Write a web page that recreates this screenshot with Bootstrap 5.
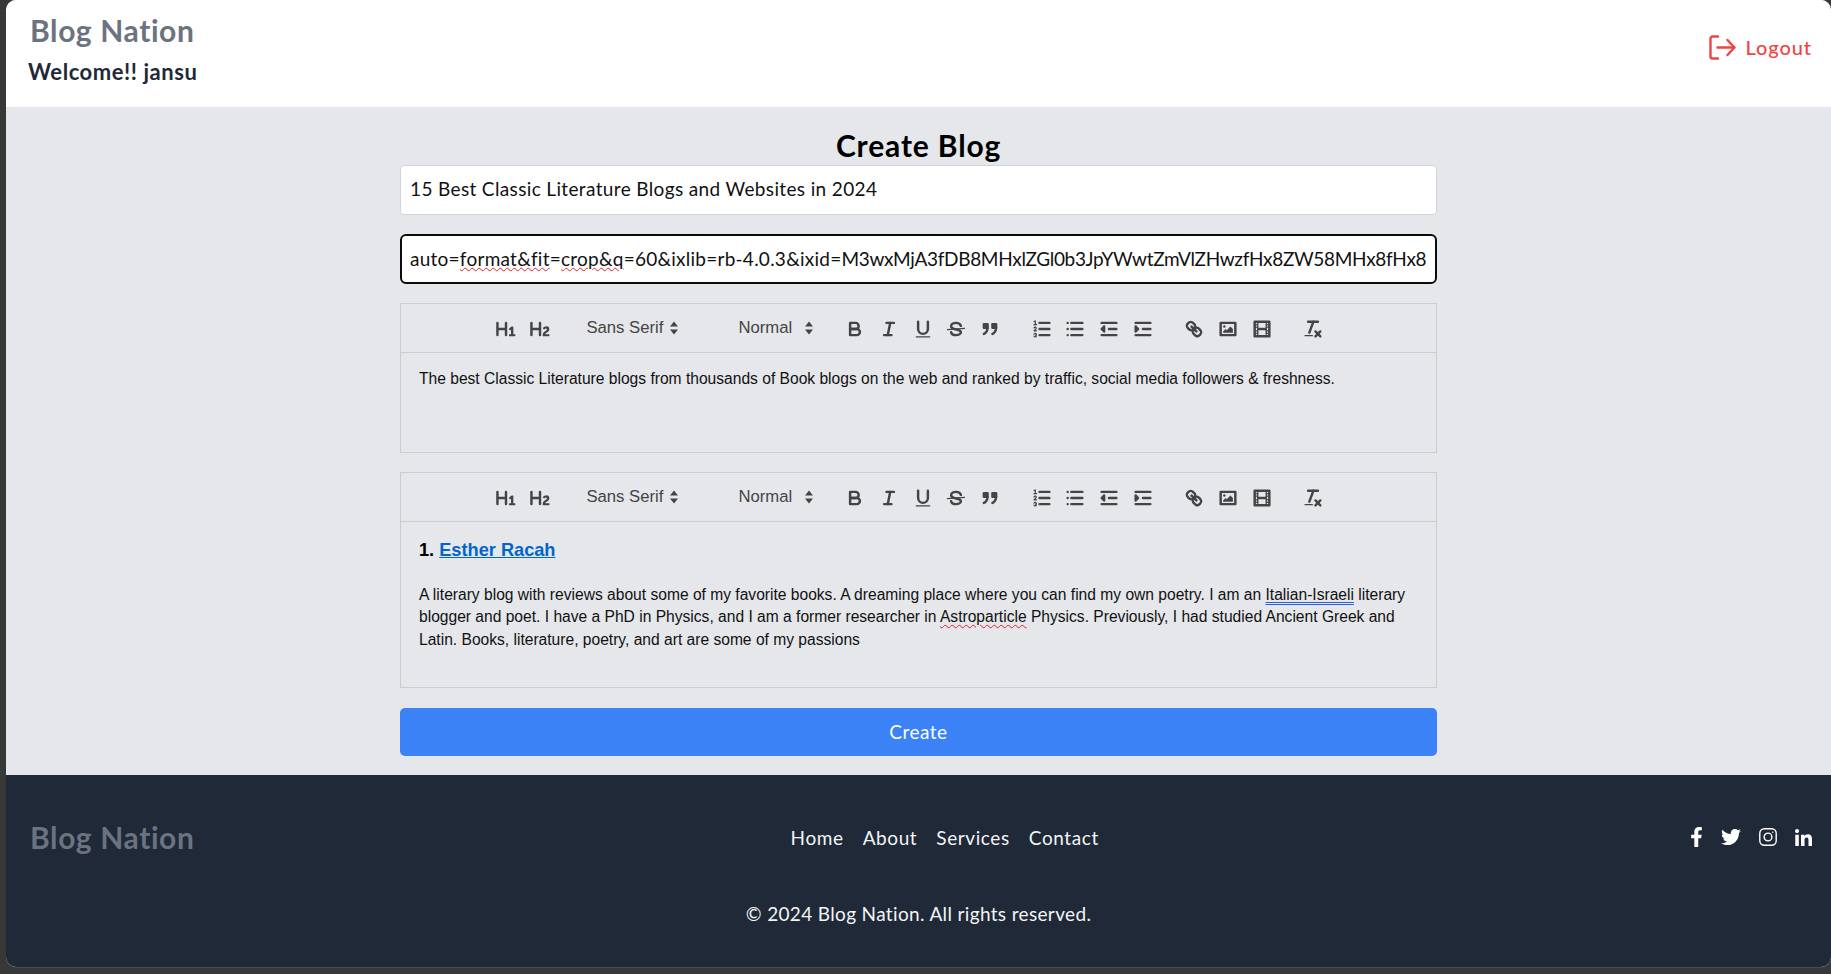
<!DOCTYPE html>
<html lang="en"><head><meta charset="utf-8"><title>Create Blog</title>
<link href="https://cdn.jsdelivr.net/npm/bootstrap@5.3.0/dist/css/bootstrap.min.css" rel="stylesheet">
<style>
html,body{height:100%;overflow:hidden}
body{background:#383838;font-family:"Lato","Open Sans",sans-serif;color:#000}
.shell{margin-left:6px;height:967px;border-radius:10px;overflow:hidden;background:#e5e7eb;box-shadow:0 1px 0 #4a4a48}
.topbar{height:107px;background:#fff;padding:12px 19px 0 22px}
.brand-name{font-size:30px;font-weight:700;color:#6b7280;line-height:36px;letter-spacing:.6px;margin-left:2px}
.greet{font-size:22px;font-weight:700;color:#1f2937;line-height:28px;margin-top:10px;letter-spacing:.55px}
.logout{color:#ef4444;font-size:20px;font-weight:500;gap:10px;margin-top:1px;letter-spacing:.9px;height:68px}
.work{height:668px;padding-top:19px}
.col-form{width:1037px;margin:0 auto}
.page-title{font-size:30px;font-weight:700;line-height:39px;margin:0;letter-spacing:.85px}
.field{height:50px;border-radius:4px;border:1px solid #d1d5db;background:#fff;font-size:19px;line-height:30px;padding:8px 9px;color:#111;white-space:nowrap;overflow:hidden;letter-spacing:.36px}
.field-focus{border:2px solid #0b0b0b;padding:8px;border-radius:6px;letter-spacing:.25px;margin-top:19px}
.url-tail{letter-spacing:-.32px}
.sp{text-decoration:underline wavy #e0242c 1px;text-underline-offset:2px}
.field .sp{text-underline-offset:1px}
.editor{border:1px solid #ccc;margin-top:19px}
.tools{height:49px;border-bottom:1px solid #ccc;padding-left:88px;color:#444}
.tool{width:33.7px;height:49px;padding-top:2px;display:flex;align-items:center;justify-content:center;flex:none}
.tool svg{width:22px;height:22px;overflow:visible;flex:none}
.s{fill:none;stroke:#444;stroke-width:2;stroke-linecap:round;stroke-linejoin:round}
.t{fill:none;stroke:#444;stroke-width:1;stroke-linecap:round;stroke-linejoin:round}
.f{fill:#444}
.picker{font-family:"Liberation Sans",Arial,sans-serif;font-size:16.7px;font-weight:500;color:#444;flex:none;padding-left:8px;height:49px}
.pick-font{width:108px;margin-left:22px}
.pick-size{width:108px;margin-left:44px}
.grp{flex:none}
.g2{margin-left:18px}
.arrows{width:10px;height:16px;margin-left:6px;flex:none}
.arrows-wide{margin-left:12px}
.editor-body{font-family:"Liberation Sans",Arial,sans-serif;font-size:15.6px;line-height:22.7px;padding:14.5px 18px 12px;color:#111}
.editor-body p{margin:0}
.one{height:99px}
.editor-body.two{height:165px;padding-top:17.5px}
.editor-body .entry-head{font-size:18.2px;font-weight:700;line-height:21px;color:#000;margin:0 0 23.2px}
.entry-head a{color:#06c;text-decoration:underline}
.dbl{text-decoration:underline double #2a5de0 1px;text-underline-offset:2px}
.btn-create{background:#3b82f6;border:0;color:#fff;font-size:19px;height:48px;border-radius:5px;width:100%;margin-top:20px;letter-spacing:.5px}
.bottom{height:192px;background:#1f2937;padding:0 19px 0 24px}
.bottom-row{height:126px}
.brand-foot{margin:-2px 0 0}
.foot-links{gap:19px;font-size:19px;color:#f3f4f6;letter-spacing:.6px;margin-left:5px}
.foot-links a{color:inherit;text-decoration:none}
.social{gap:18px;margin-top:-2px}
.social svg{display:block}
.ic-f{width:13px;height:20px}
.ic-t{width:20px;height:20px}
.ic-i{width:18px;height:18px}
.ic-l{width:17px;height:17px}
.copy{font-size:19px;color:#f3f4f6;text-align:center;margin:-1px 5px 0 0;letter-spacing:.35px}
</style></head><body>
<div class="shell d-flex flex-column">
<header class="topbar d-flex justify-content-between align-items-start">
  <div><div class="brand-name">Blog Nation</div><div class="greet">Welcome!! jansu</div></div>
  <a class="logout d-flex align-items-center text-decoration-none" href="#">
    <svg width="27" height="25" viewBox="0 0 27 25" fill="none" stroke="#ef4444" stroke-width="2.4" stroke-linecap="round" stroke-linejoin="round"><path d="M9 1.5H3.500a2 2 0 0 0-2 2v18a2 2 0 0 0 2 2H9M8.500 12.500h17M18.500 5l7 7.500-7 7.500"/></svg>
    <span>Logout</span></a>
</header>
<main class="work">
 <div class="col-form d-flex flex-column">
  <h1 class="page-title text-center">Create Blog</h1>
  <div class="form-control field">15 Best Classic Literature Blogs and Websites in 2024</div>
  <div class="form-control field field-focus">auto=<span class="sp">format&amp;fit</span>=<span class="sp">crop&amp;q</span>=60&amp;ixlib=rb-4.0.3&amp;ixid=<span class="url-tail">M3wxMjA3fDB8MHxlZGl0b3JpYWwtZmVlZHwzfHx8ZW58MHx8fHx8</span></div>

  <section class="editor">
   <div class="tools d-flex align-items-center" id="t1"></div>
   <div class="editor-body one"><p>The best Classic Literature blogs from thousands of Book blogs on the web and ranked by traffic, social media followers &amp; freshness.</p></div>
  </section>
  <section class="editor">
   <div class="tools d-flex align-items-center" id="t2"></div>
   <div class="editor-body two">
    <p class="entry-head">1. <a href="#">Esther Racah</a></p>
    <p>A literary blog with reviews about some of my favorite books. A dreaming place where you can find my own poetry. I am an <span class="dbl">Italian-Israeli</span> literary blogger and poet. I have a PhD in Physics, and I am a former researcher in <span class="sp">Astroparticle</span> Physics. Previously, I had studied Ancient Greek and Latin. Books, literature, poetry, and art are some of my passions</p>
   </div>
  </section>
  <button class="btn btn-create">Create</button>
 </div>
</main>
<footer class="bottom">
 <div class="bottom-row d-flex justify-content-between align-items-center">
  <div class="brand-name brand-foot">Blog Nation</div>
  <nav class="foot-links d-flex"><a href="#">Home</a><a href="#">About</a><a href="#">Services</a><a href="#">Contact</a></nav>
  <div class="social d-flex align-items-center">
   <svg class="ic-f" viewBox="0 0 320 512" fill="#fff"><path d="M279.14 288l14.22-92.66h-88.91v-60.13c0-25.35 12.42-50.06 52.24-50.06h40.42V6.26S260.43 0 225.36 0c-73.22 0-121.08 44.38-121.08 124.72v70.62H22.89V288h81.39v224h100.17V288z"/></svg>
   <svg class="ic-t" viewBox="0 0 512 512" fill="#fff"><path d="M459.37 151.716c.325 4.548.325 9.097.325 13.645 0 138.72-105.583 298.558-298.558 298.558-59.452 0-114.68-17.219-161.137-47.106 8.447.974 16.568 1.299 25.34 1.299 49.055 0 94.213-16.568 130.274-44.832-46.132-.975-84.792-31.188-98.112-72.772 6.498.974 12.995 1.624 19.818 1.624 9.421 0 18.843-1.3 27.614-3.573-48.081-9.747-84.143-51.98-84.143-102.985v-1.299c13.969 7.797 30.214 12.67 47.431 13.319-28.264-18.843-46.781-51.005-46.781-87.391 0-19.492 5.197-37.36 14.294-52.954 51.655 63.675 129.3 105.258 216.365 109.807-1.624-7.797-2.599-15.918-2.599-24.04 0-57.828 46.782-104.934 104.934-104.934 30.213 0 57.502 12.67 76.67 33.137 23.715-4.548 46.456-13.32 66.599-25.34-7.798 24.366-24.366 44.833-46.132 57.827 21.117-2.273 41.584-8.122 60.426-16.243-14.292 20.791-32.161 39.308-52.628 54.253z"/></svg>
   <svg class="ic-i" viewBox="0 0 18 18" fill="none" stroke="#fff" stroke-width="1.4"><rect x=".8" y=".8" width="16.4" height="16.4" rx="4.5"/><circle cx="9" cy="9" r="3.9"/><circle cx="13.7" cy="4.3" r=".7" fill="#fff" stroke="none"/></svg>
   <svg class="ic-l" viewBox="0 0 448 448" fill="#fff"><path d="M100.28 448H7.4V148.9h92.88zM53.79 108.1C24.09 108.1 0 83.5 0 53.8a53.79 53.79 0 0 1 107.58 0c0 29.7-24.1 54.3-53.79 54.3zM447.9 448h-92.68V302.4c0-34.7-.7-79.2-48.29-79.2-48.29 0-55.69 37.7-55.69 76.7V448h-92.78V148.9h89.08v40.8h1.3c12.4-23.5 42.69-48.3 87.88-48.3 94 0 111.28 61.9 111.28 142.3V448z"/></svg>
  </div>
 </div>
 <div class="copy">© 2024 Blog Nation. All rights reserved.</div>
</footer>
</div>
<template id="tpl">
 <div class="grp d-flex">
  <div class="tool"><svg viewBox="0 0 18 18"><path class="f" d="M10,4V14a1,1,0,0,1-2,0V10H3v4a1,1,0,0,1-2,0V4A1,1,0,0,1,3,4V8H8V4a1,1,0,0,1,2,0Zm6.06787,9.209H14.98975V7.59863a.54085.54085,0,0,0-.605-.60547h-.62744a1.01119,1.01119,0,0,0-.748.29688L11.645,8.56641a.5435.5435,0,0,0-.022.8584l.28613.30762a.53861.53861,0,0,0,.84717.0332l.09912-.08789a1.2137,1.2137,0,0,0,.2417-.35254h.02246s-.01123.30859-.01123.60547V13.209H12.041a.54085.54085,0,0,0-.605.60547v.43945a.54085.54085,0,0,0,.605.60547h4.02686a.54085.54085,0,0,0,.605-.60547v-.43945A.54085.54085,0,0,0,16.06787,13.209Z"/></svg></div>
  <div class="tool"><svg viewBox="0 0 18 18"><path class="f" d="M16.73975,13.81445v.43945a.54085.54085,0,0,1-.605.60547H11.855a.58392.58392,0,0,1-.64893-.60547V14.0127c0-2.90527,3.39941-3.42187,3.39941-4.55469a.77675.77675,0,0,0-.84717-.78125,1.17684,1.17684,0,0,0-.83594.38477c-.2749.26367-.561.374-.85791.13184l-.4292-.34082c-.30811-.24219-.38525-.51758-.1543-.81445a2.97155,2.97155,0,0,1,2.45361-1.17676,2.45393,2.45393,0,0,1,2.68408,2.40918c0,2.45312-3.1792,2.92676-3.27832,3.93848h2.79443A.54085.54085,0,0,1,16.73975,13.81445ZM9,3A.99974.99974,0,0,0,8,4V8H3V4A1,1,0,0,0,1,4V14a1,1,0,0,0,2,0V10H8v4a1,1,0,0,0,2,0V4A.99974.99974,0,0,0,9,3Z"/></svg></div>
 </div>
 <div class="picker pick-font d-flex align-items-center"><span>Sans Serif</span><svg class="arrows" viewBox="0 0 10 16"><path class="f" d="M5 1.500 9 6.500H1ZM5 14.500 1 9.500H9Z"/></svg></div>
 <div class="picker pick-size d-flex align-items-center"><span>Normal</span><svg class="arrows arrows-wide" viewBox="0 0 10 16"><path class="f" d="M5 1.500 9 6.500H1ZM5 14.500 1 9.500H9Z"/></svg></div>
 <div class="grp d-flex">
  <div class="tool"><svg viewBox="0 0 18 18"><path class="s" d="M5,4H9.500A2.500,2.500,0,0,1,12,6.500v0A2.500,2.500,0,0,1,9.500,9H5V4Z"/><path class="s" d="M5,9h5.500A2.500,2.500,0,0,1,13,11.500v0A2.500,2.500,0,0,1,10.500,14H5V9Z"/></svg></div>
  <div class="tool"><svg viewBox="0 0 18 18"><line class="s" x1="7" x2="13" y1="4" y2="4"/><line class="s" x1="5" x2="11" y1="14" y2="14"/><line class="s" x1="8" x2="10" y1="14" y2="4"/></svg></div>
  <div class="tool"><svg viewBox="0 0 18 18"><path class="s" d="M5,3V9a4.012,4.012,0,0,0,4,4H9a4.012,4.012,0,0,0,4-4V3"/><rect class="f" height="1" rx=".5" ry=".5" width="12" x="3" y="15"/></svg></div>
  <div class="tool"><svg viewBox="0 0 18 18"><line class="t" x1="16" x2="2" y1="8.500" y2="9.500"/><path class="s" d="M13 6.400C12.500 5 10.900 4 9 4 6.800 4 5 5.200 5 6.700c0 3.300 8 2.200 8 4.900C13 13 11.200 14 9 14c-2 0-3.700-1-4-2.400"/></svg></div>
  <div class="tool"><svg viewBox="0 0 18 18"><rect class="s f" height="3" width="3" x="4" y="5"/><rect class="s f" height="3" width="3" x="11" y="5"/><path class="s f" d="M7,8c0,4.031-3,5-3,5"/><path class="s f" d="M14,8c0,4.031-3,5-3,5"/></svg></div>
 </div>
 <div class="grp g2 d-flex">
  <div class="tool"><svg viewBox="0 0 18 18"><line class="s" x1="7" x2="15" y1="4" y2="4"/><line class="s" x1="7" x2="15" y1="9" y2="9"/><line class="s" x1="7" x2="15" y1="14" y2="14"/><line class="t" x1="2.500" x2="4.500" y1="5.500" y2="5.500"/><path class="f" d="M3.500,6A0.500,0.500,0,0,1,3,5.500V3.085l-0.276.138A0.500,0.500,0,0,1,2.053,3c-0.124-.247-0.023-0.324.224-0.447l1-.5A0.500,0.500,0,0,1,4,2.500v3A0.500,0.500,0,0,1,3.500,6Z"/><path class="t" d="M4.500,10.500h-2c0-.234,1.850-1.076,1.850-2.234A0.959,0.959,0,0,0,2.500,8.156"/><path class="t" d="M2.500,14.846a0.959,0.959,0,0,0,1.850-.109A0.700,0.700,0,0,0,3.750,14a0.688,0.688,0,0,0,.6-0.736,0.959,0.959,0,0,0-1.850-.109"/></svg></div>
  <div class="tool"><svg viewBox="0 0 18 18"><line class="s" x1="6" x2="15" y1="4" y2="4"/><line class="s" x1="6" x2="15" y1="9" y2="9"/><line class="s" x1="6" x2="15" y1="14" y2="14"/><line class="s" x1="3" x2="3" y1="4" y2="4"/><line class="s" x1="3" x2="3" y1="9" y2="9"/><line class="s" x1="3" x2="3" y1="14" y2="14"/></svg></div>
  <div class="tool"><svg viewBox="0 0 18 18"><line class="s" x1="3" x2="15" y1="14" y2="14"/><line class="s" x1="3" x2="15" y1="4" y2="4"/><line class="s" x1="9" x2="15" y1="9" y2="9"/><polyline class="s f" points="5 7 5 11 3 9 5 7"/></svg></div>
  <div class="tool"><svg viewBox="0 0 18 18"><line class="s" x1="3" x2="15" y1="14" y2="14"/><line class="s" x1="3" x2="15" y1="4" y2="4"/><line class="s" x1="9" x2="15" y1="9" y2="9"/><polyline class="s f" points="3 7 3 11 5 9 3 7"/></svg></div>
 </div>
 <div class="grp g2 d-flex">
  <div class="tool"><svg viewBox="0 0 18 18"><line class="s" x1="7" x2="11" y1="7" y2="11"/><path class="s" d="M8.900,4.577a3.476,3.476,0,0,1,.36,4.679A3.476,3.476,0,0,1,4.577,8.900C3.185,7.500,2.035,6.400,4.217,4.217S7.500,3.185,8.900,4.577Z"/><path class="s" d="M13.423,9.100a3.476,3.476,0,0,0-4.679-.36,3.476,3.476,0,0,0,.36,4.679c1.392,1.392,2.500,2.542,4.679.36S14.815,10.500,13.423,9.100Z"/></svg></div>
  <div class="tool"><svg viewBox="0 0 18 18"><rect class="s" height="10" width="12" x="3" y="4"/><circle class="f" cx="6" cy="7" r="1"/><polyline class="f" points="5 12 5 11 7 9 8 10 11 7 13 9 13 12 5 12"/></svg></div>
  <div class="tool"><svg viewBox="0 0 18 18"><rect class="s" height="12" width="12" x="3" y="3"/><rect class="f" height="12" width="1" x="5" y="3"/><rect class="f" height="12" width="1" x="12" y="3"/><rect class="f" height="2" width="8" x="5" y="8"/><rect class="f" height="1" width="3" x="3" y="5"/><rect class="f" height="1" width="3" x="3" y="7"/><rect class="f" height="1" width="3" x="3" y="10"/><rect class="f" height="1" width="3" x="3" y="12"/><rect class="f" height="1" width="3" x="12" y="5"/><rect class="f" height="1" width="3" x="12" y="7"/><rect class="f" height="1" width="3" x="12" y="10"/><rect class="f" height="1" width="3" x="12" y="12"/></svg></div>
 </div>
 <div class="grp g2 d-flex">
  <div class="tool"><svg viewBox="0 0 18 18"><line class="s" x1="5" x2="13" y1="3" y2="3"/><line class="s" x1="6" x2="9.350" y1="12" y2="3"/><line class="s" x1="11" x2="15" y1="11" y2="15"/><line class="s" x1="15" x2="11" y1="11" y2="15"/><rect class="f" height="1" rx=".5" ry=".5" width="7" x="2" y="14"/></svg></div>
 </div>
</template>
<script>
['t1','t2'].forEach(function(id){document.getElementById(id).appendChild(document.getElementById('tpl').content.cloneNode(true));});
</script>
<script src="https://cdn.jsdelivr.net/npm/bootstrap@5.3.0/dist/js/bootstrap.bundle.min.js"></script>
</body></html>
